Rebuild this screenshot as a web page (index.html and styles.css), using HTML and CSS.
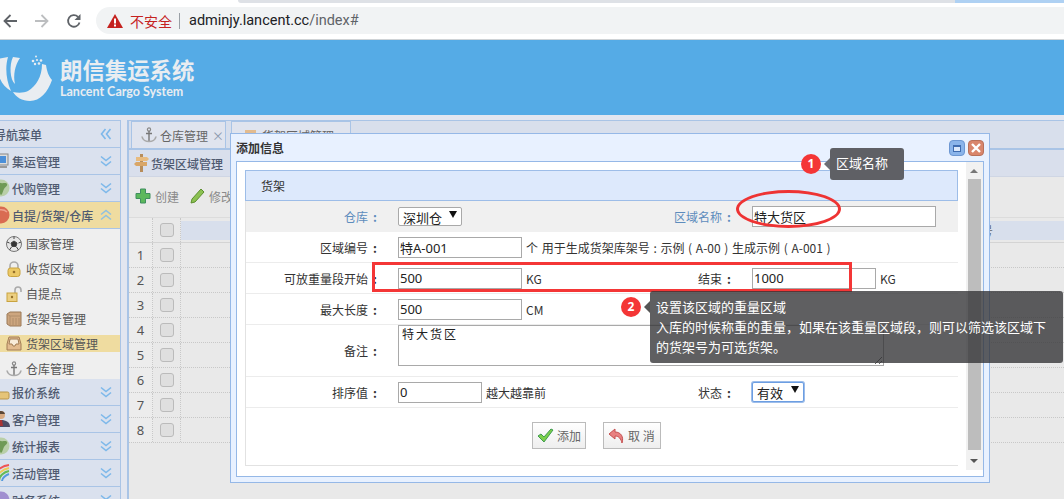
FILE: index.html
```html
<!DOCTYPE html>
<html lang="zh-CN">
<head>
<meta charset="utf-8">
<title>朗信集运系统</title>
<link rel="stylesheet" href="styles.css">
</head>
<body>
<svg class="defs" width="0" height="0">
  <defs>
    <symbol id="chev-down" viewBox="0 0 12 12"><path d="M1 1.5l5 4 5-4M1 6.5l5 4 5-4" fill="none" stroke="#7db8ea" stroke-width="1.6"/></symbol>
    <symbol id="chev-up" viewBox="0 0 12 12"><path d="M1 5.5l5-4 5 4M1 10.5l5-4 5 4" fill="none" stroke="#8fc0e0" stroke-width="1.6"/></symbol>
    <symbol id="chev-left" viewBox="0 0 12 12"><path d="M5.5 1l-4 5 4 5M10.5 1l-4 5 4 5" fill="none" stroke="#7db8ea" stroke-width="1.6"/></symbol>
    <symbol id="anchor" viewBox="0 0 16 16"><circle cx="8" cy="2.5" r="1.6" fill="none" stroke="#888" stroke-width="1.2"/><path d="M8 4v10M5 6.5h6" stroke="#777" stroke-width="1.4" fill="none"/><path d="M1 9.5c.5 3.5 4 5 7 5s6.500-1.500 7-5" stroke="#aaa" stroke-width="1.7" fill="none"/></symbol>
    <symbol id="globe" viewBox="0 0 18 18"><circle cx="9" cy="9" r="8.500" fill="#b9cfa8"/><path d="M3 3c3 1 4 0 6 1s5-1 6 1-2 3-3 5-2 6-3 6-1-4-3-5-4-4-3-8z" fill="#6f9a55"/></symbol>
  </defs>
</svg>

<div class="browser">
  <div class="tabstrip"><span class="tabstrip-tab"></span></div>
  <div class="toolbar-row">
    <svg class="nav-icon" width="16" height="16" viewBox="0 0 16 16"><path d="M15 8H2.500M8.500 2L2.500 8l6 6" fill="none" stroke="#5f6368" stroke-width="1.800"/></svg>
    <svg class="nav-icon" width="16" height="16" viewBox="0 0 16 16"><path d="M1 8h12.500M7.500 2l6 6-6 6" fill="none" stroke="#bcbec0" stroke-width="1.800"/></svg>
    <svg class="nav-icon" width="16" height="16" viewBox="0 0 16 16"><path d="M13.500 9.500A5.800 5.800 0 1 1 12 3.800" fill="none" stroke="#5f6368" stroke-width="1.800"/><path d="M14.500 1v6h-6z" fill="#5f6368"/></svg>
    <div class="omnibox">
      <svg class="warn" width="16" height="14" viewBox="0 0 16 14"><path d="M8 0l8 14H0z" fill="#c5221f"/><path d="M7 4.500h2v5H7zM7 10.500h2v2H7z" fill="#fff"/></svg>
      <span class="insecure">不安全</span>
      <span class="divider"></span>
      <span class="url">adminjy.lancent.cc<span class="url-path">/index#</span></span>
    </div>
  </div>
</div>

<header class="brand">
  <svg class="logo" width="56" height="50" viewBox="0 0 56 50">
    <path d="M0 4L10 2C7 12 8 25 13 36 6 32 2 26 0 18z" fill="#e9edf1"/>
    <path d="M15 2L22 3C17 10 15 20 17 29 12 25 11 10 15 2z" fill="#e9edf1"/>
    <path d="M44 9L48 10C49 16 50 20 54 25 50 37 42 46 32 46 24 46 18 42 15 37 20 38 26 38 30 36 38 31 44 22 44 9z" fill="#e9edf1"/>
    <g fill="#e9edf1"><circle cx="38" cy="1.500" r="1"/><circle cx="35" cy="6" r="1.300"/><circle cx="39" cy="5" r="1.100"/><circle cx="43" cy="5.500" r="1.300"/><circle cx="37" cy="9" r="1.200"/><circle cx="41" cy="8.500" r="1.300"/></g>
  </svg>
  <div class="brand-text">
    <div class="brand-cn">朗信集运系统</div>
    <div class="brand-en">Lancent Cargo System</div>
  </div>
</header>

<div class="app">
  <aside class="sidebar">
    <div class="side-head"><span class="side-title title-only">导航菜单</span><svg class="chev"><use href="#chev-left"/></svg></div>
    <div class="side-head">
      <svg class="head-icon" viewBox="0 0 18 18"><rect x="1" y="2" width="15" height="11" fill="#ddd" stroke="#888"/><rect x="3" y="4" width="11" height="7" fill="#4c8fd8"/><path d="M3 15h12" stroke="#999" stroke-width="2"/></svg>
      <span class="side-title">集运管理</span><svg class="chev"><use href="#chev-down"/></svg></div>
    <div class="side-head">
      <svg class="head-icon"><use href="#globe"/></svg>
      <span class="side-title">代购管理</span><svg class="chev"><use href="#chev-down"/></svg></div>
    <div class="side-head active">
      <svg class="head-icon" viewBox="0 0 18 18"><circle cx="9" cy="9" r="8.500" fill="#d96b52"/><path d="M3 6c3-3 9-3 12 0" stroke="#eda08e" stroke-width="1.500" fill="none"/></svg>
      <span class="side-title">自提/货架/仓库</span><svg class="chev"><use href="#chev-up"/></svg></div>
    <ul class="side-list">
      <li class="side-item">
        <svg class="item-icon" viewBox="0 0 16 16"><circle cx="8" cy="8" r="7.500" fill="#e6e6e6" stroke="#777"/><path d="M8 5l3 2-1 3.500H6L5 7zM8 .5v2.500M1 6l2.500 1M15 6l-2.500 1M3.500 14l2-3M12.500 14l-2-3" fill="#333" stroke="#444"/></svg>国家管理</li>
      <li class="side-item">
        <svg class="item-icon" viewBox="0 0 16 16"><path d="M4 7V5a4 4 0 0 1 8 0v2" fill="none" stroke="#aaa" stroke-width="1.600"/><rect x="2" y="7" width="12" height="8.500" rx="2.500" fill="#ecc966" stroke="#c9a33f"/><circle cx="8" cy="11" r="1.300" fill="#95702a"/></svg>收货区域</li>
      <li class="side-item">
        <svg class="item-icon" viewBox="0 0 16 16"><path d="M9 7V4a3 3 0 0 1 6 0v2" fill="none" stroke="#aaa" stroke-width="1.600"/><rect x="1" y="7" width="10" height="8.500" fill="#ecd083" stroke="#c9a33f"/><circle cx="6" cy="11" r="1.200" fill="#95702a"/></svg>自提点</li>
      <li class="side-item">
        <svg class="item-icon" viewBox="0 0 16 16"><path d="M4 1h11v14H4L1 13V3z" fill="#cda67f" stroke="#9a7857"/><path d="M1 3l3 2h11M4 5v10M7 7v7M10 7v7M13 7v7" fill="none" stroke="#b08e6c"/></svg>货架号管理</li>
      <li class="side-item current">
        <svg class="item-icon" viewBox="0 0 16 16"><path d="M3 1h10l2 7v6H1V8z" fill="#e2bb8f" stroke="#a27d55"/><path d="M4 3h8l1 5h-3l-1 2H7L6 8H3z" fill="#f8ecd9" stroke="#a27d55"/></svg>货架区域管理</li>
      <li class="side-item">
        <svg class="item-icon"><use href="#anchor"/></svg>仓库管理</li>
    </ul>
    <div class="side-head">
      <svg class="head-icon" viewBox="0 0 18 18"><rect x="0" y="2" width="6" height="14" fill="#e5c478"/><rect x="6" y="9" width="11" height="7" rx="1.500" fill="#e5c478" stroke="#b8954a"/><path d="M0 6h6M0 10h6M0 13h6" stroke="#b8954a"/></svg>
      <span class="side-title">报价系统</span><svg class="chev"><use href="#chev-down"/></svg></div>
    <div class="side-head">
      <svg class="head-icon" viewBox="0 0 18 18"><circle cx="9" cy="5" r="4" fill="#d7a981"/><path d="M5 4c1-4 7-4 8 0z" fill="#5a4636"/><path d="M0 17c0-5 4-7 9-7s9 2 9 7z" fill="#4d4d66"/><path d="M8 10h2l1 6H7z" fill="#a33"/></svg>
      <span class="side-title">客户管理</span><svg class="chev"><use href="#chev-down"/></svg></div>
    <div class="side-head">
      <svg class="head-icon"><use href="#globe"/></svg>
      <span class="side-title">统计报表</span><svg class="chev"><use href="#chev-down"/></svg></div>
    <div class="side-head">
      <svg class="head-icon" viewBox="0 0 18 18"><g fill="none" stroke-width="2"><path d="M1 17C1 9 8 2 17 1" stroke="#e55"/><path d="M4 17c0-6 6-12 13-13" stroke="#ec5"/><path d="M7 17c0-5 5-9 10-10" stroke="#6b5"/><path d="M10 17c0-3 4-6 7-7" stroke="#59d"/></g></svg>
      <span class="side-title">活动管理</span><svg class="chev"><use href="#chev-down"/></svg></div>
    <div class="side-head">
      <svg class="head-icon" viewBox="0 0 18 18"><circle cx="9" cy="9" r="8.500" fill="#a08fd0"/></svg>
      <span class="side-title">财务系统</span><svg class="chev"><use href="#chev-down"/></svg></div>
  </aside>

  <main class="content">
    <div class="tabs">
      <div class="tab tab-first"><svg class="tab-icon"><use href="#anchor"/></svg>仓库管理<span class="tab-close">×</span></div>
      <div class="tab tab-second">
        <svg class="tab-icon" viewBox="0 0 16 16"><rect x="2" y="3" width="11" height="4" fill="#e2bb8f"/></svg>货架区域管理</div>
    </div>
    <div class="panel-title">
      <svg class="sign" width="15" height="18" viewBox="0 0 15 18"><rect x="6" y="0" width="3" height="18" fill="#b78d5b"/><path d="M2 3h11l2 2-2 2H2z" fill="#e8bb7f"/><path d="M13 8H2L0 10l2 2h11z" fill="#d9a667"/></svg>
      货架区域管理
    </div>
    <div class="grid-toolbar">
      <span class="tool">
        <svg width="16" height="16" viewBox="0 0 16 16"><path d="M5.500 1h5v4.500H15v5h-4.500V15h-5v-4.500H1v-5h4.500z" fill="#5cb85c" stroke="#3f8f5f"/></svg>创建</span>
      <span class="tool">
        <svg width="15" height="16" viewBox="0 0 15 16"><path d="M11 1l3 3L5 14l-4 1 1-4z" fill="#8cc152" stroke="#5d8f2f"/></svg>修改</span>
    </div>
    <div class="grid">
      <div class="grid-row grid-head">
        <span class="cell-no"></span><span class="cell-ck"><i class="ck"></i></span>
        <span class="cell-rest"><span class="band">货架号</span></span>
      </div>
      <div class="grid-row"><span class="cell-no">1</span><span class="cell-ck"><i class="ck"></i></span><span class="cell-rest"></span></div>
      <div class="grid-row"><span class="cell-no">2</span><span class="cell-ck"><i class="ck"></i></span><span class="cell-rest"></span></div>
      <div class="grid-row"><span class="cell-no">3</span><span class="cell-ck"><i class="ck"></i></span><span class="cell-rest"></span></div>
      <div class="grid-row"><span class="cell-no">4</span><span class="cell-ck"><i class="ck"></i></span><span class="cell-rest"></span></div>
      <div class="grid-row"><span class="cell-no">5</span><span class="cell-ck"><i class="ck"></i></span><span class="cell-rest"></span></div>
      <div class="grid-row"><span class="cell-no">6</span><span class="cell-ck"><i class="ck"></i></span><span class="cell-rest"></span></div>
      <div class="grid-row"><span class="cell-no">7</span><span class="cell-ck"><i class="ck"></i></span><span class="cell-rest"></span></div>
      <div class="grid-row"><span class="cell-no">8</span><span class="cell-ck"><i class="ck"></i></span><span class="cell-rest"></span></div>
    </div>
  </main>
</div>

<section class="dialog">
  <div class="dialog-head">
    <span class="dialog-title">添加信息</span>
    <span class="win-btn win-min"><i></i></span>
    <span class="win-btn win-close">
      <svg width="10" height="10" viewBox="0 0 10 10"><path d="M1 1l8 8M9 1L1 9" stroke="#fff" stroke-width="2.400"/></svg>
    </span>
  </div>
  <div class="dialog-body">
    <form class="form">
      <div class="form-title">货架</div>
      <div class="form-row shaded">
        <label class="lbl blue">仓库</label>
        <div class="val"><span class="sel sel-wh"><select class="native"><option>深圳仓</option></select></span></div>
        <label class="lbl blue">区域名称</label>
        <div class="val"><input class="inp w184" value="特大货区"></div>
      </div>
      <div class="form-row">
        <label class="lbl">区域编号</label>
        <div class="val span3"><input class="inp w124" value="特A-001"><span class="hint hint-long">个 用于生成货架库架号 : 示例 ( A-00 ) 生成示例 ( A-001 )</span></div>
      </div>
      <div class="form-row">
        <label class="lbl">可放重量段开始</label>
        <div class="val"><input class="inp w124" value="500"><span class="hint">KG</span></div>
        <label class="lbl">结束</label>
        <div class="val"><input class="inp w124" value="1000"><span class="hint">KG</span></div>
      </div>
      <div class="form-row">
        <label class="lbl">最大长度</label>
        <div class="val span3"><input class="inp w124" value="500"><span class="hint">CM</span></div>
      </div>
      <div class="form-row tall">
        <label class="lbl">备注</label>
        <div class="val span3"><textarea class="memo">特大货区</textarea></div>
      </div>
      <div class="form-row">
        <label class="lbl">排序值</label>
        <div class="val"><input class="inp w84" value="0"><span class="hint">越大越靠前</span></div>
        <label class="lbl">状态</label>
        <div class="val"><span class="sel sel-state"><select class="native"><option>有效</option></select></span></div>
      </div>
      <div class="form-actions">
        <button type="button" class="btn">
          <svg width="17" height="15" viewBox="0 0 17 15"><path d="M1 8l3-2 3 3 7-8 2 1-9 12z" fill="#7ccf4a" stroke="#3d9a4f"/></svg>添加</button>
        <button type="button" class="btn btn-cancel">
          <svg width="17" height="16" viewBox="0 0 17 16"><path d="M7 1L1 6l6 5V8c4 0 6 3 7 7 2-6-1-11-7-11z" fill="#e88080" stroke="#c65050"/></svg>取 消</button>
      </div>
    </form>
    <div class="scrollbar"><span class="arrow-up"></span><span class="thumb"></span><span class="arrow-down"></span></div>
  </div>
</section>

<div class="mark-rect"></div>
<div class="mark-ellipse"></div>
<span class="num num-1">1</span>
<div class="tip tip-1">区域名称</div>
<span class="num num-2">2</span>
<div class="tip tip-2">设置该区域的重量区域<br>入库的时候称重的重量，如果在该重量区域段，则可以筛选该区域下的货架号为可选货架。</div>
</body>
</html>
```

FILE: styles.css
```css
* { box-sizing: border-box; }
html, body { margin: 0; padding: 0; }
body {
  width: 1064px;
  height: 499px;
  overflow: hidden;
  position: relative;
  background: #e9e9e9;
  font-family: "Noto Sans CJK SC", "Noto Sans", sans-serif;
  font-size: 12px;
  color: #333;
}
.defs { position: absolute; }

/* browser chrome */
.browser { height: 40px; background: #fff; border-bottom: 1px solid #cfd3d6; }
.tabstrip { height: 3px; margin-left: 238px; background: #dee1e6; border-radius: 0 0 0 4px; display: flex; justify-content: flex-end; }
.tabstrip-tab { width: 109px; background: #afd1f3; }
.toolbar-row { display: flex; align-items: center; height: 27px; margin-top: 4px; padding-left: 2px; }
.nav-icon { margin-right: 16px; flex: none; }
.omnibox { flex: 1; margin-left: -2px; height: 27px; display: flex; align-items: center; background: #f1f3f4; border-radius: 14px 0 0 14px; padding-left: 11px; }
.warn { flex: none; }
.insecure { margin-left: 7px; font-size: 14px; color: #c5221f; }
.divider { width: 1px; height: 16px; background: #9aa0a6; margin: 0 9px 0 7px; }
.url { font-family: Roboto, sans-serif; font-size: 14.500px; color: #202124; }
.url-path { color: #5f6368; }

/* brand */
.brand { height: 75px; background: #55abe6; display: flex; align-items: flex-start; padding-top: 15px; }
.logo { flex: none; margin-left: -2px; margin-right: 6px; }
.brand-text { color: #e9edf1; }
.brand-cn { font-size: 22.400px; line-height: 28px; font-weight: 700; white-space: nowrap; }
.brand-en { font-family: Lato, sans-serif; font-size: 12.500px; line-height: 15px; margin-top: 1px; font-weight: 700; white-space: nowrap; }

/* layout */
.app { display: flex; height: 384px; padding-top: 5px; background: #e2e6f0; }
.sidebar { width: 121px; flex: none; overflow: hidden; border-right: 1px solid #a9c4e6; border-top: 1px solid #a9c4e6; background: #efefef; }
.side-head { height: 27px; display: flex; align-items: center; background: #dae1ee; border-bottom: 1px solid #a9c4e6; }
.side-head.active { background: #efdca0; }
.head-icon { width: 18px; height: 18px; margin-left: -8px; flex: none; margin-right: 2px; }
.side-title { flex: 1; font-weight: 500; color: #4f5a70; white-space: nowrap; }
.title-only { margin-left: -6px; }
.chev { width: 12px; height: 12px; flex: none; margin-right: 8px; }
.side-list { list-style: none; margin: 0; padding: 2px 0 0; height: 150px; }
.side-item { height: 25px; flex: none; display: flex; align-items: center; padding-left: 6px; color: #555; white-space: nowrap; }
.side-item.current { background: linear-gradient(#efefef 0 4px, #efdca0 4px 21px, #efefef 21px); }
.item-icon { width: 16px; height: 16px; margin-right: 4px; flex: none; }

.content { flex: 1; margin-left: 6px; min-width: 0; border-left: 2px solid #a9c4e6; border-top: 1px solid #a9c4e6; background: #e9e9e9; }
.tabs { height: 29px; display: flex; align-items: flex-end; gap: 5px; padding-left: 2px; background: #d8dfec; border-bottom: 2px solid #a9c4e6; }
.tab { height: 27px; border: 1px solid #a9c4e6; border-bottom: 0; background: #e0e4ee; display: flex; align-items: center; white-space: nowrap; color: #666; }
.tab-first { width: 95px; padding-left: 9px; }
.tab-second { width: 120px; padding-left: 11px; }
.tab-icon { width: 16px; height: 16px; margin-right: 3px; flex: none; }
.tab-close { margin-left: 4px; color: #8a97ad; }
.panel-title { height: 27px; display: flex; align-items: center; gap: 2px; padding-left: 5px; background: #d9dfec; font-weight: 500; color: #4f5a70; border-bottom: 1px solid #cfd6e4; }
.grid-toolbar { height: 40px; display: flex; align-items: center; gap: 11px; padding: 0 0 2px 6px; }
.tool { display: flex; align-items: center; gap: 4px; color: #8a8a8a; }
.grid-row { height: 25px; display: flex; border-bottom: 1px dotted #c8c8c8; }
.grid-head { height: 26px; border-top: 1px solid #dcdcdc; border-bottom: 1px solid #d4d4d4; }
.cell-no { width: 24px; flex: none; display: flex; align-items: center; justify-content: center; background: #ececec; border-right: 1px dotted #c8c8c8; font-family: "Noto Sans", sans-serif; font-size: 13px; color: #555; }
.cell-ck { width: 28px; flex: none; display: flex; align-items: center; justify-content: center; border-right: 1px dotted #c8c8c8; }
.cell-rest { flex: 1; display: flex; align-items: center; }
.ck { width: 14px; height: 14px; border: 1px solid #bbb; border-radius: 3px; background: #dfdfdf; }
.band { flex: 1; height: 19px; background: #d8dfec; text-align: right; padding-right: 71px; line-height: 19px; color: #666; }

/* dialog */
.dialog { position: absolute; left: 230px; top: 133px; width: 760px; height: 350px; border: 1px solid #95b8e7; background: #e8f1ff; padding: 0 5px 5px; display: flex; flex-direction: column; }
.dialog-head { height: 27px; flex: none; display: flex; align-items: center; gap: 3px; }
.dialog-title { flex: 1; font-weight: 700; color: #333; }
.win-btn { width: 16px; height: 16px; border-radius: 4px; display: flex; align-items: center; justify-content: center; margin-top: 1px; }
.win-min { background: #8ab4ea; border: 1px solid #6d97d2; }
.win-min i { width: 8px; height: 7px; border: 1px solid #3f6cb0; border-top-width: 2px; background: #dbe8fb; }
.win-close { background: #d9866c; border: 1px solid #b8705a; }
.dialog-body { flex: 1; min-height: 0; border: 1px solid #95b8e7; background: #fff; display: flex; align-items: flex-start; padding: 8px 0 0 8px; position: relative; }
.form { width: 713px; flex: none; border-left: 1px solid #e2e2e2; border-bottom: 1px solid #e2e2e2; }
.form-title { height: 31px; margin-left: -1px; line-height: 29px; padding-left: 15px; background: #dde9fc; border: 1px solid #9dbde8; color: #333; }
.form-row { display: grid; grid-template-columns: 133px 200px 154px 1fr; min-height: 31px; align-items: center; border-bottom: 1px solid #ececec; }
.form-row.shaded { background: #f0f0f0; border-bottom: 0; }
.form-row.tall { height: 52px; align-items: start; }
.form-row.tall .lbl { align-self: center; }
.lbl { text-align: right; white-space: nowrap; color: #333; }
.lbl::after { content: ":"; margin-left: 5px; margin-right: 2px; font-weight: 700; }
.lbl.blue { color: #5d8cbd; }
.val { padding-left: 19px; display: flex; align-items: center; white-space: nowrap; }
.span3 { grid-column: 2 / 5; }
.inp { height: 21px; border: 1px solid #a9a9a9; padding: 0 1px; font: 13px "Noto Sans", "Noto Sans CJK SC", sans-serif; color: #222; background: #fff; }
.w124 { width: 124px; }
.w184 { width: 184px; }
.w84 { width: 84px; }
.hint { margin-left: 4px; color: #333; }
.hint-long { word-spacing: 1px; }
.memo { width: 486px; height: 41px; border: 1px solid #a9a9a9; padding: 0 3px; font: 12px/1.300 "Noto Sans CJK SC", sans-serif; letter-spacing: 2px; color: #222; resize: both; display: block; }
.sel { position: relative; display: block; height: 19px; border: 1px solid #a9a9a9; border-radius: 2px; background: #fff; }
.sel::after { content: ""; position: absolute; right: 4px; top: 3px; border: 4px solid transparent; border-top: 7px solid #111; border-bottom: 0; }
.sel-wh { width: 64px; }
.sel-state { width: 52px; height: 20px; border: 1px solid #6c9ee2; box-shadow: 0 0 0 1px #9dbdea; }
.native { appearance: none; border: 0; outline: 0; background: transparent; width: 100%; height: 100%; padding: 0 0 0 4px; font: 13px "Noto Sans CJK SC", sans-serif; color: #222; display: block; }
.form-actions { height: 57px; display: flex; gap: 17px; padding: 14px 0 0 286px; align-items: flex-start; }
.btn { height: 27px; display: flex; align-items: center; gap: 3px; padding: 0 4px; border: 1px solid #bbb; background: linear-gradient(#fff, #eee); font: 12px "Noto Sans CJK SC", sans-serif; color: #666; white-space: nowrap; width: 54px; }
.btn-cancel { width: 58px; }
.scrollbar { position: absolute; left: 729px; top: 0; width: 17px; height: 308px; background: #f1f1f1; }
.arrow-up { position: absolute; left: 4px; top: 7px; border: 4px solid transparent; border-bottom: 4px solid #777; border-top: 0; }
.thumb { position: absolute; left: 2px; top: 17px; width: 13px; height: 271px; background: #bdbdbd; }
.arrow-down { position: absolute; left: 4px; top: 297px; border: 4px solid transparent; border-top: 4px solid #555; border-bottom: 0; }

/* annotations */
.mark-rect { position: absolute; left: 372px; top: 262px; width: 480px; height: 30px; border: 3px solid #f43636; }
.mark-ellipse { position: absolute; left: 736px; top: 190px; width: 105px; height: 38px; border: 3px solid #ee3333; border-radius: 50%; }
.num { position: absolute; width: 20px; height: 20px; border-radius: 50%; background: #f43636; color: #fff; font: 700 12px/20px "Noto Sans", sans-serif; text-align: center; }
.num-1 { left: 801px; top: 154px; }
.num-2 { left: 621px; top: 297px; }
.tip { position: absolute; border-radius: 3px; background: rgba(50, 50, 52, .78); color: #fff; font-size: 13px; line-height: 20px; }
.tip::before { content: ""; position: absolute; left: -6px; border: 6px solid transparent; border-left: 0; }
.tip-1 { left: 830px; top: 148px; width: 74px; height: 32px; padding: 5px 6px; background: #5f6065; }
.tip-1::before { top: 10px; border-right: 6px solid #6d6e73; }
.tip-2 { left: 650px; top: 291px; width: 413px; height: 72px; padding: 6px; }
.tip-2::before { top: 10px; border-right: 6px solid #555; }
```
